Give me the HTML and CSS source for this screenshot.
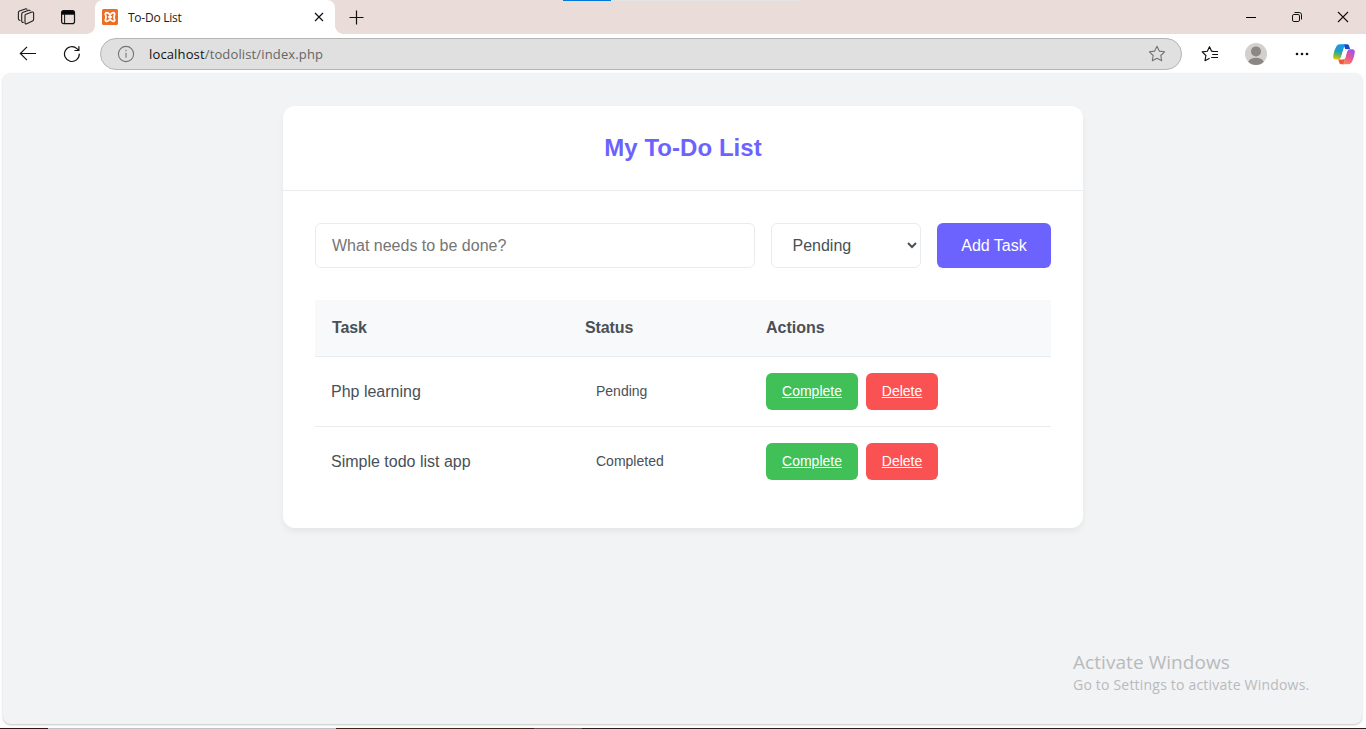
FILE: index.html
```html
<!DOCTYPE html>
<html lang="en">
<head>
<meta charset="utf-8">
<title>To-Do List</title>
<link rel="stylesheet" href="styles.css">
</head>
<body>
<div class="browser">
  <div class="loading"><i class="loading-done"></i><i class="loading-rest"></i></div>
  <div class="tabbar">
    <svg class="workspaces" width="18" height="18" viewBox="0 0 18 18" fill="none" stroke="#222" stroke-width="1.1" stroke-linejoin="round" stroke-linecap="round"><path d="M9 6.2 15 4.1Q16.6 3.6 16.6 5.2V11.2Q16.6 12.5 15.5 13L9.7 15.7Q8 16.4 8 14.7V7.6Q8 6.6 9 6.2ZM6.3 14.4Q4.7 14.5 4.7 12.8V6Q4.7 4.9 5.7 4.5L11.6 2.3Q12.8 2 13.2 2.8M2.9 12.4Q1.4 12.3 1.4 10.8V4.4Q1.4 3.3 2.4 2.9L8.3.9Q9.5.6 10 1.3"/></svg>
    <svg class="tab-actions" width="16" height="16" viewBox="0 0 16 16" fill="none" stroke="#111" stroke-width="1.2"><rect x="1.6" y="1.6" width="12.9" height="13" rx="2.2"/><path d="M1.6 4.2Q1.6 2 3.4 2H12.4Q14.4 2 14.4 4.2V5.1H1.6Z" fill="#000"/><path d="M4.6 5V14.5" stroke-width="1"/></svg>
    <div class="tab">
      <svg class="favicon" width="16" height="16" viewBox="0 0 16 16"><rect width="16" height="16" rx="1.5" fill="#ed6d25"/><path d="M8 6.1C7 4.3 6.2 3.6 4.9 3.6 3.4 3.6 3 5 3.6 6.1 4.1 7.1 4.1 8.9 3.6 9.9 3 11 3.4 12.4 4.9 12.4 6.2 12.4 7 11.7 8 9.9 9 11.7 9.8 12.4 11.1 12.4 12.6 12.4 13 11 12.4 9.9 11.9 8.9 11.9 7.1 12.4 6.1 13 5 12.6 3.6 11.1 3.6 9.8 3.6 9 4.3 8 6.1ZM6.2 8H9.8" fill="none" stroke="#fff" stroke-width="1.8" stroke-linejoin="round"/></svg>
      <span class="tab-title">To-Do List</span>
      <svg class="tab-close" width="10" height="10" viewBox="0 0 10 10" stroke="#111" stroke-width="1.2"><path d="M1 1 9 9M9 1 1 9"/></svg>
    </div>
    <svg class="new-tab" width="15" height="15" viewBox="0 0 15 15" stroke="#111" stroke-width="1.2"><path d="M7.5.5V14.5M.5 7.5H14.5"/></svg>
    <div class="window-controls">
      <svg width="12" height="12" viewBox="0 0 12 12" stroke="#000"><path d="M1 6.5H11"/></svg>
      <svg width="12" height="12" viewBox="0 0 12 12" fill="none" stroke="#111"><rect x="1.5" y="3.5" width="7" height="7" rx="1.4"/><path d="M3.5 1.5H8.2Q10.5 1.5 10.5 3.8V8.5"/></svg>
      <svg width="12" height="12" viewBox="0 0 12 12" stroke="#111" stroke-width="1.1"><path d="M1 1 11 11M11 1 1 11"/></svg>
    </div>
  </div>
  <div class="toolbar">
    <svg class="back" width="18" height="16" viewBox="0 0 18 16" fill="none" stroke="#111" stroke-width="1.15"><path d="M17 7.5H1.3M8 .8 1.3 7.5 8 14.2"/></svg>
    <svg class="reload" width="18" height="18" viewBox="0 0 18 18" fill="none" stroke="#111" stroke-width="1.2" stroke-linecap="round"><path d="M16.3 9A7.4 7.4 0 1 1 13.9 3.6L15.8 5.4M15.9 1.5V5.5H11.9"/></svg>
    <div class="address">
      <svg width="18" height="18" viewBox="0 0 18 18" fill="none" stroke="#747474" stroke-width="1.1"><circle cx="9" cy="9" r="7.6"/><path d="M9 7.7V12.8"/><circle cx="9" cy="5.5" r=".7" fill="#747474" stroke="none"/></svg>
      <span class="url"><span class="host">localhost</span>/todolist/index.php</span>
      <svg class="star" width="18" height="18" viewBox="0 0 18 18" fill="none" stroke="#737373" stroke-width="1.1" stroke-linejoin="round"><path d="M9 1.3 11.3 6.1 16.6 6.8 12.8 10.5 13.7 15.8 9 13.3 4.3 15.8 5.2 10.5 1.4 6.8 6.7 6.1Z"/></svg>
    </div>
    <div class="tools">
      <svg width="18" height="18" viewBox="0 0 18 18" fill="none" stroke="#111" stroke-width="1.15" stroke-linejoin="round"><path d="M12 6.4 10.5 6.1 8.5 1.7 6.3 6.2 1.2 6.9 4.9 10.5 4 15.7 8.6 13.3M10.7 6.5H17M11.2 9.5H17M10.2 12.5H17"/></svg>
      <svg width="22" height="22" viewBox="0 0 22 22"><circle cx="11" cy="11" r="11" fill="#d2d0cc"/><circle cx="11" cy="8.4" r="5" fill="#8b8783"/><path d="M3.2 18.7C5.3 13.3 16.7 13.3 18.8 18.7A11 11 0 0 1 3.2 18.7Z" fill="#8b8783"/></svg>
      <svg width="14" height="4" viewBox="0 0 14 4" fill="#111"><circle cx="2" cy="2" r="1.3"/><circle cx="7" cy="2" r="1.3"/><circle cx="12" cy="2" r="1.3"/></svg>
      <svg class="copilot" width="22" height="21" viewBox="0 0 22 21">
        <defs>
          <linearGradient id="cool" x1="0.3" y1="0" x2="0.1" y2="1"><stop offset="0" stop-color="#1599e8"/><stop offset=".4" stop-color="#1f9fc4"/><stop offset=".68" stop-color="#6bb84c"/><stop offset="1" stop-color="#f6c800"/></linearGradient>
          <linearGradient id="warm" x1="0.7" y1="0" x2="0.2" y2="1"><stop offset="0" stop-color="#9b55ef"/><stop offset=".5" stop-color="#e85596"/><stop offset="1" stop-color="#ff8b4c"/></linearGradient>
        </defs>
        <path d="M10.5.3H14.2Q15.6.3 16.1 1.8L17.2 5.6H12.4Z" fill="#1647c8"/>
        <path d="M5.2 15 6.2 18.8Q6.7 20.3 8.4 20.3H10.8L12 15Z" fill="#ee5b35"/>
        <path d="M6.8.3H12.6Q11.6.8 11.1 2.6L8.1 13.2Q7.4 15.5 5.2 15.5H2.7Q-.5 15.5.3 11.6Q1 6 3.3 2.4 4.5.3 6.8.3Z" fill="url(#cool)"/>
        <path d="M16.8 5.2H19.2Q22.4 5.2 21.7 9Q20.9 14.5 18.7 18.2 17.4 20.3 15.2 20.3H9.3Q10.6 19.8 11.1 18L14 7.6Q14.7 5.2 16.8 5.2Z" fill="url(#warm)"/>
        <path d="M13 5.2H17Q14.8 5.4 14 7.6L12.3 13.6Q11.7 15.6 9.6 15.6H5Q7.4 15.3 8.1 13.2L9.7 7.7Q10.5 5.2 13 5.2Z" fill="#fff"/>
      </svg>
    </div>
  </div>
  <main class="page">
    <section class="card">
      <header class="card-header"><h1>My To-Do List</h1></header>
      <div class="card-body">
        <form class="task-form">
          <input class="task-input" type="text" placeholder="What needs to be done?">
          <select class="task-status"><option>Pending</option><option>Completed</option></select>
          <button class="add" type="button">Add Task</button>
        </form>
        <table class="tasks">
          <thead><tr><th class="col-task">Task</th><th class="col-status">Status</th><th class="col-actions">Actions</th></tr></thead>
          <tbody>
            <tr><td>Php learning</td><td><span class="status">Pending</span></td><td><div class="actions"><a class="btn complete">Complete</a><a class="btn delete">Delete</a></div></td></tr>
            <tr><td>Simple todo list app</td><td><span class="status">Completed</span></td><td><div class="actions"><a class="btn complete">Complete</a><a class="btn delete">Delete</a></div></td></tr>
          </tbody>
        </table>
      </div>
    </section>
  </main>
  <div class="taskbar"><i class="seg-start"></i><i class="seg-search"></i><i class="seg-mid"></i><i class="seg-app"></i><i class="seg-end"></i></div>
  <div class="watermark"><div class="wm-title">Activate Windows</div><div class="wm-text">Go to Settings to activate Windows.</div></div>
</div>
</body>
</html>
```
FILE: styles.css
```css
* { box-sizing: border-box; }
body { margin: 0; overflow: hidden; background: #fff; font-family: "Liberation Sans", Arial, sans-serif; }
svg { display: block; flex: none; }
.browser { position: relative; width: 1366px; height: 729px; display: flex; flex-direction: column; background: #fdfdfd; }

.loading { position: absolute; top: 0; left: 563px; width: 240px; height: 1px; display: flex; }
.loading-done { width: 48px; background: #0078d7; }
.loading-rest { flex: 1; background: #e3e3e3; }

.tabbar { height: 34px; display: flex; align-items: center; background: #eadcd8; padding-left: 17px; }
.tab-actions { margin-left: 25px; }
.tab { position: relative; width: 240px; height: 34px; margin-left: 19px; padding: 0 11px 0 7px; display: flex; align-items: center; background: #fff; border-radius: 8px 8px 0 0; font: 12px "Open Sans", "Noto Sans", sans-serif; color: #1b1b1b; }
.tab::before, .tab::after { content: ""; position: absolute; bottom: 0; width: 8px; height: 8px; }
.tab::before { left: -8px; background: radial-gradient(circle at 0 0, #eadcd8 7.5px, #fff 8px); }
.tab::after { right: -8px; background: radial-gradient(circle at 100% 0, #eadcd8 7.5px, #fff 8px); }
.tab-title { margin-left: 10px; letter-spacing: -0.25px; }
.tab-close { margin-left: auto; }
.new-tab { margin-left: 14px; }
.window-controls { margin-left: auto; padding-right: 17px; display: flex; gap: 34px; }

.toolbar { height: 39px; padding: 0 11px 0 19px; display: flex; align-items: center; background: #fff; }
.reload { margin-left: 26px; }
.address { width: 1082px; height: 32px; margin-left: 19px; padding: 0 15px 0 16px; display: flex; align-items: center; background: #e0e0e0; border: 1px solid #b5b5b5; border-radius: 16px; }
.url { margin-left: 14px; font: 13px "Open Sans", "Noto Sans", sans-serif; letter-spacing: 0.14px; color: #666; }
.host { color: #111; }
.star { margin-left: auto; }
.tools { margin-left: 19px; display: flex; align-items: center; }
.tools svg { margin-right: 26px; }
.tools svg:nth-child(2) { margin-right: 28px; }
.tools svg:nth-child(3) { margin-right: 24px; }
.tools .copilot { margin: 1px 0 0; }

.page { height: 651px; margin: 0 4px 0 3px; padding-top: 33px; background: #f1f3f5; border-radius: 8px; box-shadow: 0 1px 2px rgba(0, 0, 0, .22); }
.card { width: 800px; margin: 0 auto 0 280px; background: #fff; border-radius: 12px; box-shadow: 0 4px 6px rgba(0, 0, 0, .05); }
.card-header { height: 85px; display: flex; align-items: center; justify-content: center; border-bottom: 1px solid #e9ecef; }
h1 { margin: 0; font-size: 24px; line-height: 28px; letter-spacing: 0.05px; color: #6c63ff; }
.card-body { padding: 32px; }

.task-form { height: 45px; display: flex; gap: 16px; }
.task-input, .task-status, .add { font: 16px "Liberation Sans", Arial, sans-serif; border-radius: 6px; }
.task-input { width: 440px; padding: 0 16px; border: 1px solid #e9ecef; }
.task-status { width: 150px; padding: 0 0 0 16.5px; border: 1px solid #e9ecef; background: #fff; color: #495057; }
.add { width: 114px; padding: 0; border: 0; background: #6c63ff; color: #fff; }

.tasks { width: 736px; margin-top: 32px; table-layout: fixed; border-collapse: separate; border-spacing: 0; color: #495057; font-size: 16px; text-align: left; }
.tasks th { height: 57px; padding: 0 16px 0 17px; background: #f8f9fa; border-bottom: 1px solid #e9ecef; line-height: 24px; letter-spacing: -0.1px; }
.tasks .col-actions { padding-left: 16px; letter-spacing: 0; }
.col-task { width: 253px; }
.col-status { width: 182px; }
.tasks td { padding: 16px; border-bottom: 1px solid #e9ecef; }
.tasks tr:last-child td { border-bottom: 0; }
.status { display: block; padding: 0 12px 2px; font-size: 14px; }
.actions { display: flex; gap: 8px; }
.btn { height: 37px; padding-bottom: 2px; display: flex; align-items: center; justify-content: center; border-radius: 6px; color: #fff; font-size: 14px; text-decoration: underline; }
.complete { width: 92px; background: #40c057; }
.delete { width: 72px; background: #fa5252; }

.taskbar { height: 1px; margin-top: 4px; display: flex; background: #381a1c; }
.seg-start { width: 48px; background: #351416; }
.seg-search { width: 288px; background: #c3c1c1; }
.seg-mid { width: 198px; background: #46201d; }
.seg-app { width: 48px; background: #6d4f52; }
.seg-end { flex: 1; background: #2d1a1e; }

.watermark { position: absolute; left: 1073px; top: 650px; font-family: "Open Sans", "Noto Sans", sans-serif; color: #b9babc; white-space: nowrap; }
.wm-title { font-size: 19px; line-height: 25px; letter-spacing: 0.06px; }
.wm-text { font-size: 14px; line-height: 20px; letter-spacing: 0.2px; }
```
